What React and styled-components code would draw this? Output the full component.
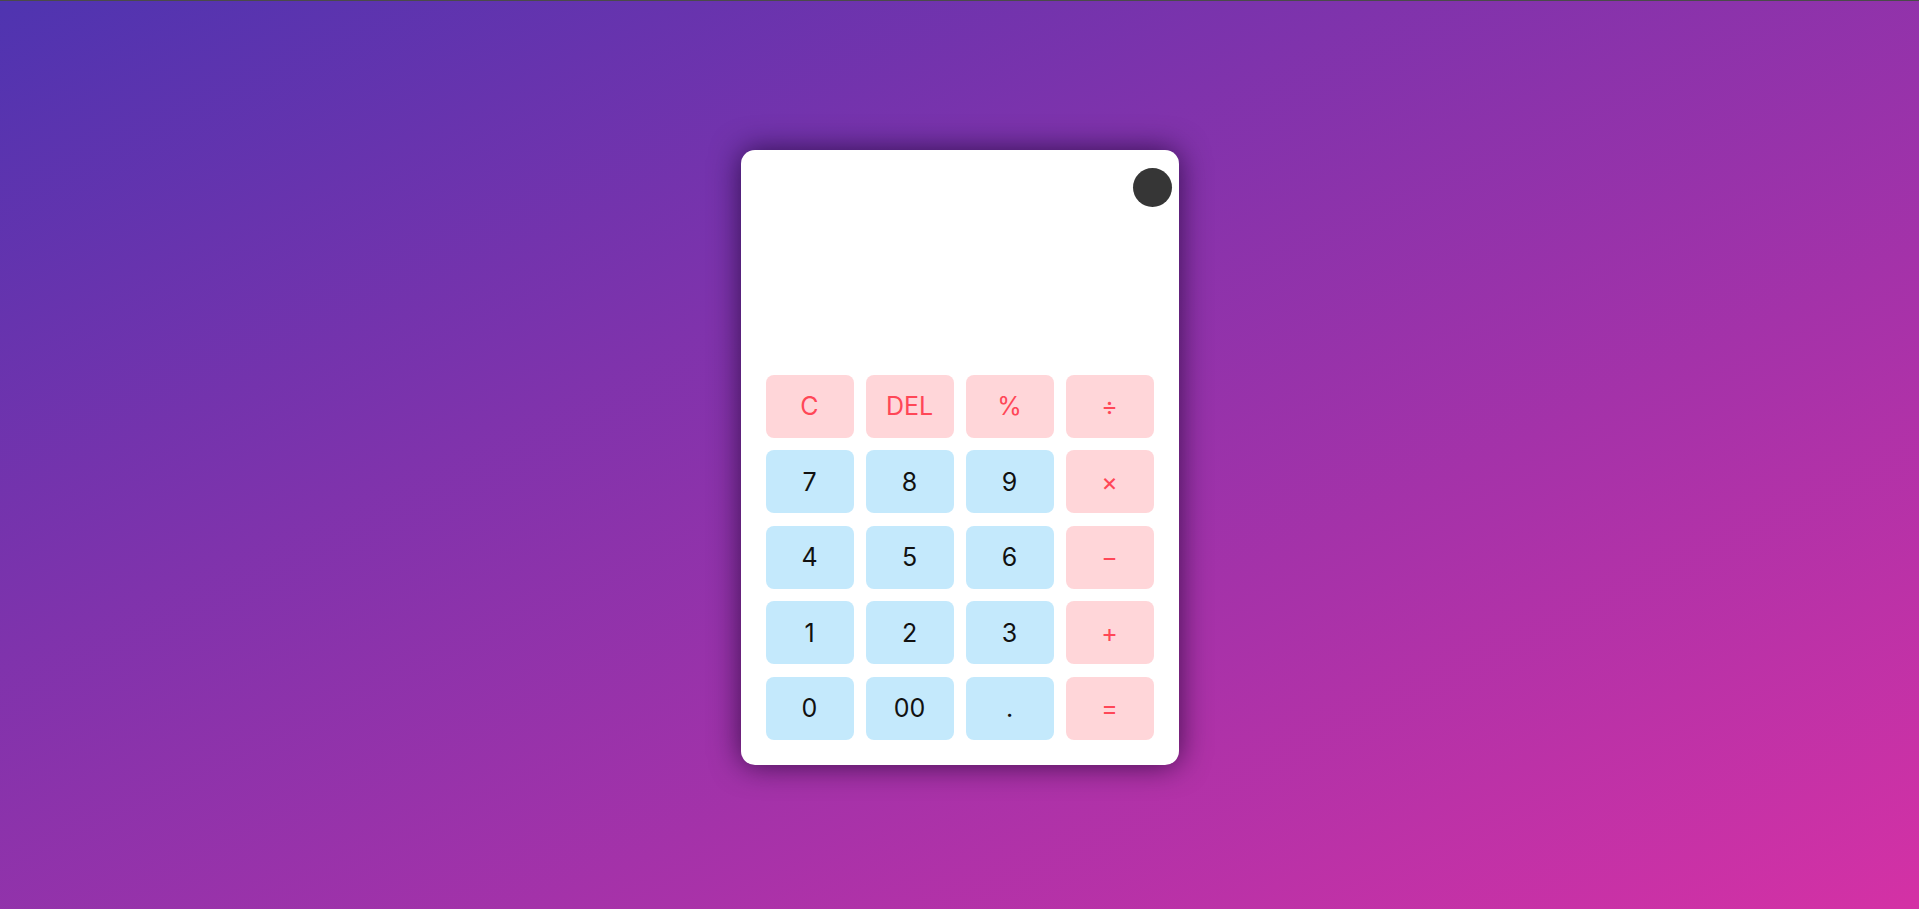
import styled, { createGlobalStyle } from "styled-components";

const GlobalStyle = createGlobalStyle`
  * {
    box-sizing: border-box;
  }
  html, body {
    margin: 0;
    padding: 0;
  }
  body {
    font-family: "Inter", "Liberation Sans", sans-serif;
    border-top: 1px solid #4a4a4a;
  }
`;

const keys = [
  { label: "C", op: true },
  { label: "DEL", op: true },
  { label: "%", op: true },
  { label: "÷", op: true },
  { label: "7" },
  { label: "8" },
  { label: "9" },
  { label: "×", op: true },
  { label: "4" },
  { label: "5" },
  { label: "6" },
  { label: "−", op: true },
  { label: "1" },
  { label: "2" },
  { label: "3" },
  { label: "+", op: true },
  { label: "0" },
  { label: "00" },
  { label: "." },
  { label: "=", op: true },
];

function App() {
  return (
    <>
      <GlobalStyle />
      <Page>
        <Calculator>
          <Toggle />
          <Display></Display>
          <Keypad>
            {keys.map((k) => (
              <Key key={k.label} $op={k.op}>
                {k.label}
              </Key>
            ))}
          </Keypad>
        </Calculator>
      </Page>
    </>
  );
}

const Page = styled.div`
  min-height: calc(100vh - 1px);
  padding-top: 4px;
  display: flex;
  align-items: center;
  justify-content: center;
  background: linear-gradient(to bottom right, #4f34b0, #d431a5);
`;

const Calculator = styled.div`
  position: relative;
  width: 438px;
  padding: 25px;
  background-color: #ffffff;
  border-radius: 14px;
  box-shadow: 0 0 30px rgba(15, 0, 35, 0.7);
`;

const Toggle = styled.div`
  position: absolute;
  top: 18px;
  right: 7px;
  width: 39px;
  height: 39px;
  border-radius: 50%;
  background-color: #363636;
`;

const Display = styled.div`
  height: 200px;
`;

const Keypad = styled.div`
  display: grid;
  grid-template-columns: repeat(4, 88px);
  grid-auto-rows: 63px;
  column-gap: 12px;
  row-gap: 12.5px;
`;

const Key = styled.button`
  border: none;
  border-radius: 8px;
  font-family: inherit;
  font-size: 25px;
  font-weight: 400;
  background-color: ${(p) => (p.$op ? "#ffd6d9" : "#c4e9fc")};
  color: ${(p) => (p.$op ? "#ff4757" : "#111111")};
  display: flex;
  align-items: center;
  justify-content: center;
  cursor: pointer;
`;

export default App;
